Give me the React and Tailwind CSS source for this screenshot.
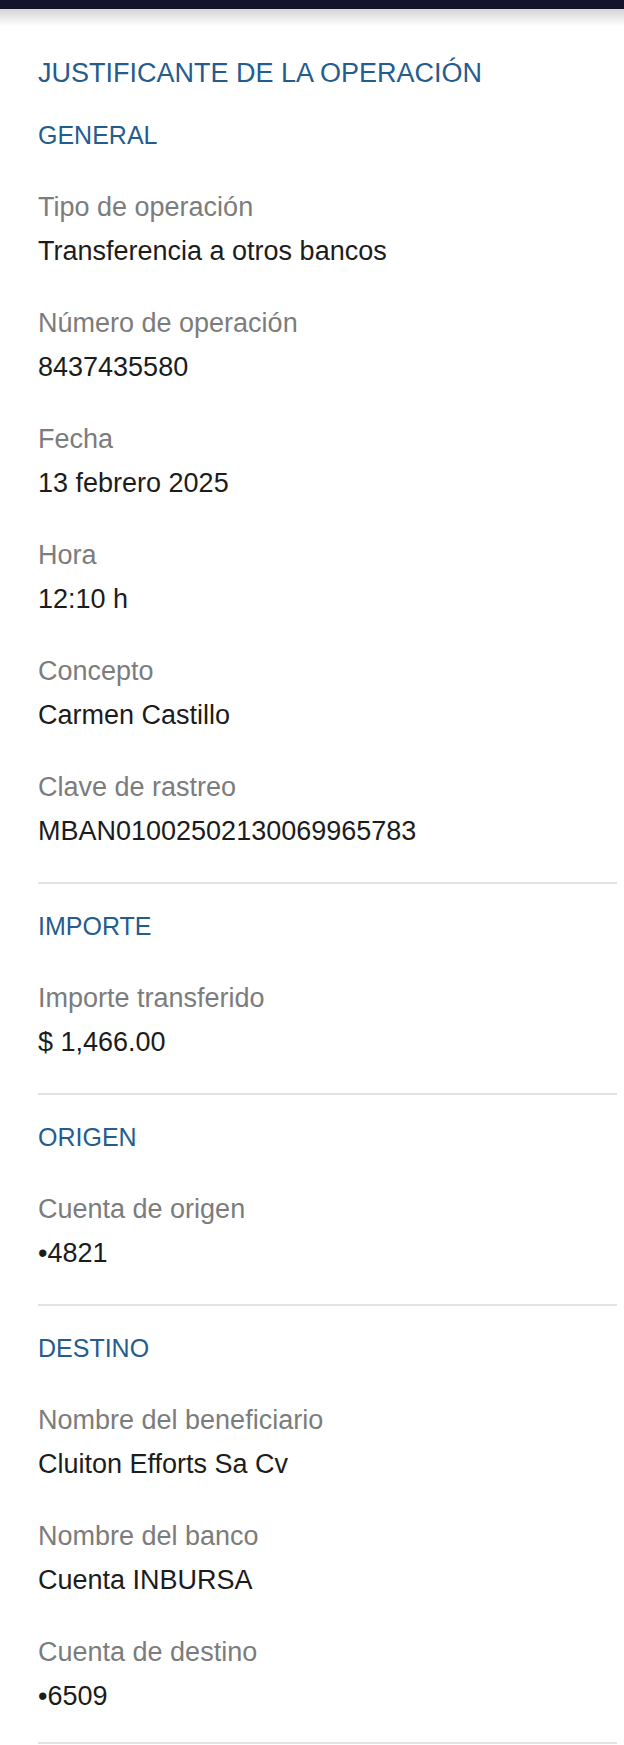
import React from "react";

const sections = [
  {
    title: "GENERAL",
    rows: [
      ["Tipo de operación", "Transferencia a otros bancos"],
      ["Número de operación", "8437435580"],
      ["Fecha", "13 febrero 2025"],
      ["Hora", "12:10 h"],
      ["Concepto", "Carmen Castillo"],
      ["Clave de rastreo", "MBAN01002502130069965783"],
    ],
  },
  {
    title: "IMPORTE",
    rows: [["Importe transferido", "$ 1,466.00"]],
  },
  {
    title: "ORIGEN",
    rows: [["Cuenta de origen", "•4821"]],
  },
  {
    title: "DESTINO",
    rows: [
      ["Nombre del beneficiario", "Cluiton Efforts Sa Cv"],
      ["Nombre del banco", "Cuenta INBURSA"],
      ["Cuenta de destino", "•6509"],
    ],
  },
];

const Section = ({ title, rows, first, last }) => (
  <section
    className={`flex flex-col gap-[28px] border-b-2 border-[#e3e3e3] ${
      first ? "mt-[18px]" : "pt-[20px]"
    } ${last ? "pb-[24px]" : "pb-[29px]"}`}
  >
    <h2 className="text-[25px] leading-[44px] text-[#255c8e]">{title}</h2>
    {rows.map(([label, value]) => (
      <div key={label} className="flex flex-col">
        <span className="text-[27px] leading-[44px] text-[#7c7c7c]">{label}</span>
        <span className="text-[27px] leading-[44px] text-[#1c1c1c]">{value}</span>
      </div>
    ))}
  </section>
);

export default function App() {
  return (
    <div
      className="min-h-screen w-full bg-white overflow-hidden"
      style={{ fontFamily: '"Liberation Sans", Arial, sans-serif' }}
    >
      {/* status bar strip + shadow */}
      <div className="h-[9px] bg-[#13132b]"></div>
      <div className="h-[17px] bg-gradient-to-b from-[#d4d4d4] to-white"></div>

      <main className="pl-[38px] pr-[7px] pt-[25px]">
        <h1 className="text-[27px] leading-[44px] text-[#255c8e]">
          JUSTIFICANTE DE LA OPERACIÓN
        </h1>

        {sections.map((s, i) => (
          <Section
            key={s.title}
            {...s}
            first={i === 0}
            last={i === sections.length - 1}
          />
        ))}
      </main>
    </div>
  );
}
